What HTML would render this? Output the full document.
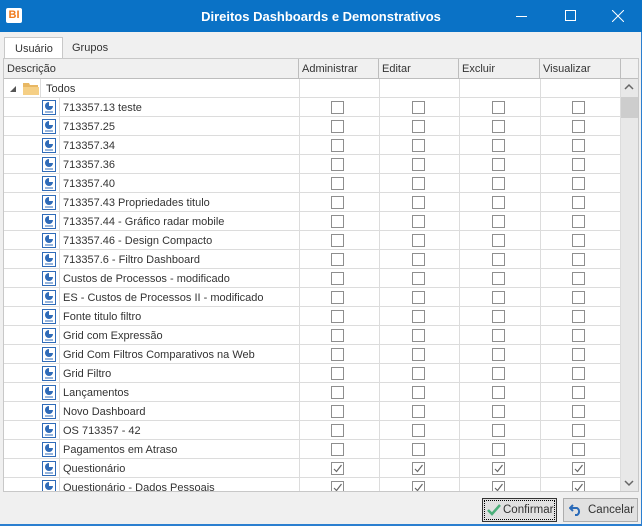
<!DOCTYPE html>
<html><head><meta charset="utf-8"><style>
*{margin:0;padding:0;box-sizing:border-box}
body{width:642px;height:528px;overflow:hidden;background:#f0f0f0;font-family:"Liberation Sans","DejaVu Sans",sans-serif;font-size:11px;color:#333;position:relative}
.abs{position:absolute}
.title{left:0;top:0;width:642px;height:32px;background:#0a72c6;color:#fff}
.grid{left:3px;top:58px;width:636px;height:434px;background:#fff;border:1px solid #c8c8c8;overflow:hidden}
.hdr{position:absolute;top:0;height:20px;background:#f0f0f0;border-right:1px solid #bdbdbd;border-bottom:1px solid #bdbdbd;padding:4px 0 0 3px;color:#333}
.row{position:absolute;left:0;width:616px;height:19px;border-bottom:1px solid #dcdcdc}
.cb{position:absolute;width:13px;height:13px;border:1px solid #8e8e8e;background:#fff;top:3px}
.vl{position:absolute;top:20px;width:1px;height:420px;background:#dcdcdc}
.txt{position:absolute;left:59px;top:4px;white-space:nowrap}
.ic{position:absolute;left:38px;top:2px;width:14px;height:15px;border:1px solid #2f6bb8;background:#fff}
.btn{position:absolute;top:498px;height:24px;background:#e1e1e1;border:1px solid #adadad;font-size:11.5px}
</style></head><body>
<div class="abs title">
 <div class="abs" style="left:6px;top:8px;width:16px;height:15px;background:#fff;border-radius:2px;color:#f07b1c;font-weight:bold;font-size:11px;line-height:15px;text-align:center">BI</div>
 <div class="abs" style="left:0;width:642px;top:9px;text-align:center;font-weight:bold;font-size:13px">Direitos Dashboards e Demonstrativos</div>
 <div class="abs" style="left:516px;top:16px;width:11px;height:1px;background:#fff"></div>
 <div class="abs" style="left:565px;top:10px;width:11px;height:11px;border:1px solid #fff"></div>
 <svg class="abs" style="left:612px;top:10px" width="12" height="12"><path d="M0 0L12 12M12 0L0 12" stroke="#fff" stroke-width="1"/></svg>
</div>
<div class="abs" style="left:4px;top:37px;width:59px;height:22px;background:#fff;border:1px solid #c8c8c8;border-bottom:none;padding:5px 0 0 10px;font-size:11px">Usuário</div>
<div class="abs" style="left:72px;top:42px">Grupos</div>
<div class="abs grid">
 <div class="hdr" style="left:0;width:295px">Descrição</div>
 <div class="hdr" style="left:295px;width:80px">Administrar</div>
 <div class="hdr" style="left:375px;width:80px">Editar</div>
 <div class="hdr" style="left:455px;width:81px">Excluir</div>
 <div class="hdr" style="left:536px;width:81px">Visualizar</div>
 <div class="hdr" style="left:617px;width:19px;border-right:none"></div>
 <div class="abs" style="left:616px;top:20px;width:18px;height:414px;background:#e8e8e8"></div>
 <div class="abs" style="left:616px;top:38px;width:18px;height:21px;background:#cdcdcd"></div>
 <svg class="abs" style="left:620px;top:24px" width="10" height="8"><path d="M1 6L5 2L9 6" stroke="#666" stroke-width="1.5" fill="none"/></svg>
 <svg class="abs" style="left:620px;top:420px" width="10" height="8"><path d="M1 2L5 6L9 2" stroke="#666" stroke-width="1.5" fill="none"/></svg>
 <div id="rows"></div>
 <div class="vl" style="left:295px"></div><div class="vl" style="left:375px"></div><div class="vl" style="left:455px"></div><div class="vl" style="left:536px"></div><div class="vl" style="left:616px"></div>
</div>
<div class="btn" style="left:482px;width:75px;border:1px solid #333;outline:1px dotted #000;outline-offset:-3px">
 <svg class="abs" style="left:4px;top:5px" width="14" height="12"><path d="M1 6L5 10L13 1" stroke="#4caf7a" stroke-width="2.5" fill="none"/></svg>
 <span class="abs" style="left:20px;top:5px">Confirmar</span></div>
<div class="btn" style="left:563px;width:75px">
 <svg class="abs" style="left:5px;top:5px" width="14" height="12"><path d="M4 1L1 4L4 7M1 4H8A4 4 0 0 1 8 11H6" stroke="#2a6ab8" stroke-width="2" fill="none"/></svg>
 <span class="abs" style="left:24px;top:5px">Cancelar</span></div>
<div class="abs" style="left:0;top:524px;width:642px;height:2px;background:#2b7fd0"></div>
<div class="abs" style="left:641px;top:32px;width:1px;height:494px;background:#2b7fd0"></div>
<div class="abs" style="left:0;top:526px;width:642px;height:2px;background:#fff"></div>
<script>
var names=["713357.13 teste","713357.25","713357.34","713357.36","713357.40","713357.43 Propriedades titulo","713357.44 - Gráfico radar mobile","713357.46 - Design Compacto","713357.6 - Filtro Dashboard","Custos de Processos - modificado","ES - Custos de Processos II - modificado","Fonte titulo filtro","Grid com Expressão","Grid Com Filtros Comparativos na Web","Grid Filtro","Lançamentos","Novo Dashboard","OS 713357 - 42","Pagamentos em Atraso","Questionário","Questionário - Dados Pessoais"];
var h='<div class="row" style="top:20px"><svg class="abs" style="left:6px;top:7px" width="7" height="7"><path d="M6 0V6H0Z" fill="#555"/></svg><svg class="abs" style="left:19px;top:3px" width="16" height="13"><path d="M0 1H6L7 3H15V13H0Z" fill="#e8b763"/><path d="M0 5H16V13H0Z" fill="#f5cf85"/></svg><div class="abs" style="left:36px;top:0;width:1px;height:19px;background:#dcdcdc"></div><span class="abs" style="left:42px;top:4px">Todos</span></div>';
var cx=[327,408,488,568];
names.forEach(function(n,i){
 var t=39+i*19,c=i>=19;
 h+='<div class="row" style="top:'+t+'px"><div class="ic"><svg width="12" height="13" style="position:absolute;left:0;top:0"><circle cx="6" cy="5" r="4" fill="#2f6bb8"/><path d="M6 5V0.5A4.5 4.5 0 0 1 10.5 5Z" fill="#fff"/><path d="M2 11H10" stroke="#2f6bb8"/></svg></div><div class="abs" style="left:55px;top:0;width:1px;height:19px;background:#dcdcdc"></div><span class="txt">'+n+'</span>';
 cx.forEach(function(x){h+='<div class="cb" style="left:'+x+'px">'+(c?'<svg width="11" height="11" style="position:absolute;left:0;top:0"><path d="M2 6L4.5 8.5L9.5 2" stroke="#666" stroke-width="1.2" fill="none"/></svg>':'')+'</div>';});
 h+='</div>';
});
document.getElementById('rows').innerHTML=h;
</script>
</body></html>
